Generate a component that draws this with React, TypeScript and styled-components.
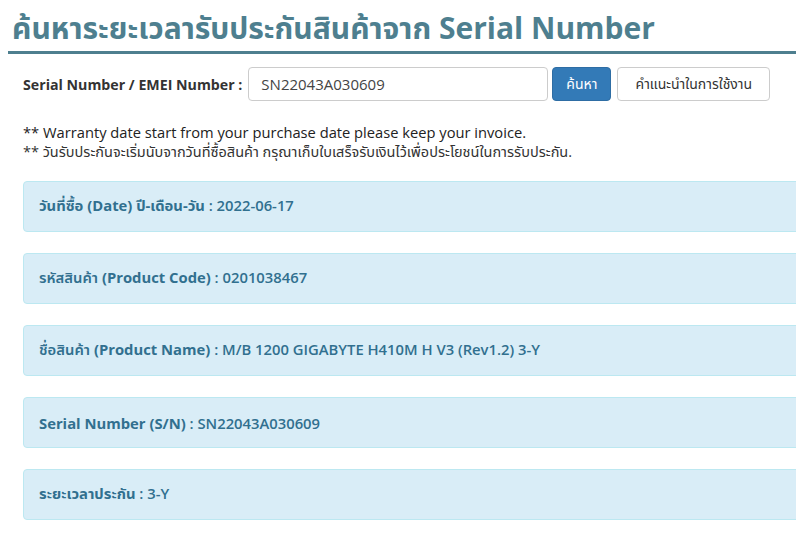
import React from 'react';
import styled, { createGlobalStyle } from 'styled-components';

const GlobalStyle = createGlobalStyle`
  html, body {
    margin: 0;
    padding: 0;
    background: #ffffff;
    overflow: hidden;
  }
  body {
    font-family: 'Open Sans', 'Noto Sans', 'Noto Sans Thai', sans-serif;
    color: #333333;
  }
`;

const Page = styled.div`
  width: 830px;
  padding: 0 0 20px 8px;
`;

const Title = styled.h1`
  margin: 0;
  padding: 10px 0 5px 4px;
  font-size: 30px;
  line-height: 36px;
  font-weight: 700;
  color: #4e7f8f;
  border-bottom: 3px solid #4e7f8f;
  width: 784px;
`;

const Content = styled.div`
  padding: 13px 0 0 15px;
`;

const SearchRow = styled.form`
  display: flex;
  align-items: center;
  height: 34px;
`;

const Label = styled.label`
  font-size: 14.2px;
  font-weight: 700;
  color: #333333;
  margin-right: 6px;
`;

const Input = styled.input`
  width: 300px;
  height: 34px;
  box-sizing: border-box;
  border: 1px solid #cccccc;
  border-radius: 4px;
  padding: 0 12px;
  font-family: inherit;
  font-size: 15px;
  color: #444444;
  margin-right: 4px;
`;

const Button = styled.button<{ $primary?: boolean; $w: number }>`
  width: ${(p) => p.$w}px;
  height: 34px;
  box-sizing: border-box;
  padding: 0;
  border-radius: 4px;
  font-family: inherit;
  font-size: 14px;
  border: 1px solid ${(p) => (p.$primary ? '#2e6da4' : '#cccccc')};
  background: ${(p) => (p.$primary ? '#337ab7' : '#ffffff')};
  color: ${(p) => (p.$primary ? '#ffffff' : '#333333')};
  margin-right: 6px;
`;

const Notes = styled.div`
  margin-top: 21px;
  line-height: 20px;
`;

const NoteEn = styled.div`
  font-size: 14.7px;
  color: #222222;
`;

const NoteTh = styled.div`
  font-size: 14.5px;
  color: #333333;
`;

const Panels = styled.div`
  margin-top: 19px;
  display: flex;
  flex-direction: column;
  gap: 21px;
`;

const Panel = styled.div`
  height: 51px;
  box-sizing: border-box;
  display: flex;
  align-items: center;
  padding: 0 15px;
  background: #d9edf7;
  border: 1px solid #bce8f1;
  border-radius: 4px;
  color: #31708f;
  font-size: 14.8px;
  font-weight: 600;
  white-space: pre;
`;

const PanelText = styled.span``;

const Strong = styled.strong`
  font-weight: 700;
`;

const rows: { pre?: string; bold: string; value: string }[] = [
  { bold: 'วันที่ซื้อ (Date) ปี-เดือน-วัน', value: ' : 2022-06-17' },
  { pre: 'รหัสสินค้า ', bold: '(Product Code)', value: ' : 0201038467' },
  { pre: 'ชื่อสินค้า ', bold: '(Product Name)', value: ' : M/B 1200 GIGABYTE H410M H V3 (Rev1.2) 3-Y' },
  { bold: 'Serial Number (S/N)', value: ' : SN22043A030609' },
  { bold: 'ระยะเวลาประกัน', value: ' : 3-Y' },
];

export default function App() {
  return (
    <Page>
      <GlobalStyle />
      <Title>ค้นหาระยะเวลารับประกันสินค้าจาก Serial Number</Title>
      <Content>
        <SearchRow onSubmit={(e) => e.preventDefault()}>
          <Label>Serial Number / EMEI Number :</Label>
          <Input defaultValue="SN22043A030609" />
          <Button $primary $w={59}>ค้นหา</Button>
          <Button type="button" $w={153}>คำแนะนำในการใช้งาน</Button>
        </SearchRow>
        <Notes>
          <NoteEn>** Warranty date start from your purchase date please keep your invoice.</NoteEn>
          <NoteTh>** วันรับประกันจะเริ่มนับจากวันที่ซื้อสินค้า กรุณาเก็บใบเสร็จรับเงินไว้เพื่อประโยชน์ในการรับประกัน.</NoteTh>
        </Notes>
        <Panels>
          {rows.map((r) => (
            <Panel key={r.bold}>
              <PanelText>
                {r.pre}
                <Strong>{r.bold}</Strong>
                {r.value}
              </PanelText>
            </Panel>
          ))}
        </Panels>
      </Content>
    </Page>
  );
}
